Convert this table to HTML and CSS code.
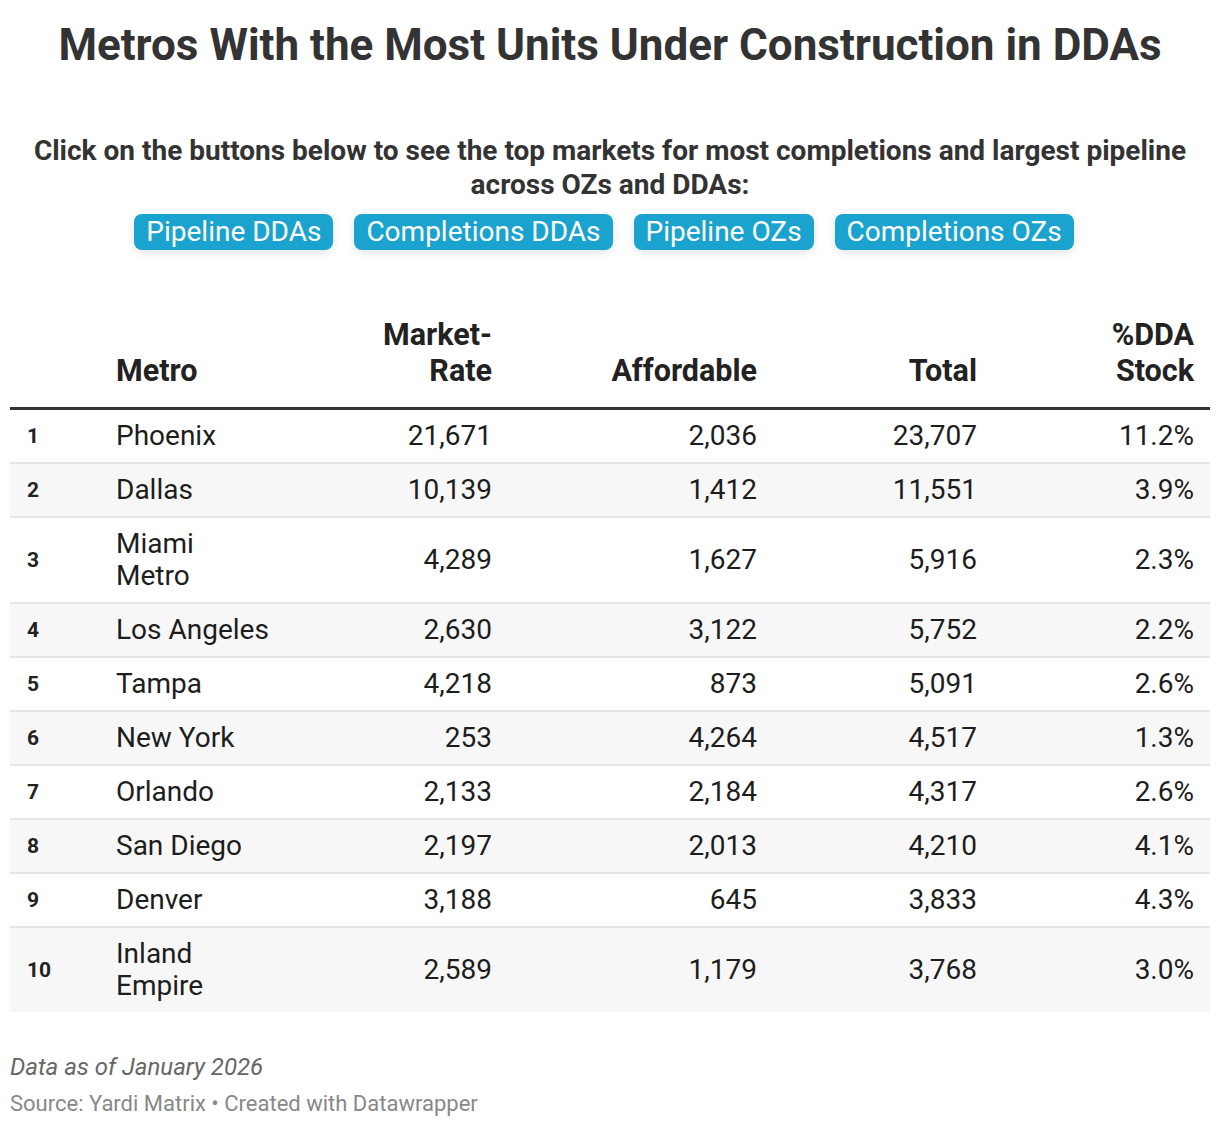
FILE: index.html
```html
<!DOCTYPE html>
<html lang="en">
<head>
<meta charset="utf-8">
<title>Metros With the Most Units Under Construction in DDAs</title>
<link rel="stylesheet" href="styles.css">
</head>
<body>
<div class="chart">
  <h1 class="title">Metros With the Most Units Under Construction in DDAs</h1>
  <p class="intro">Click on the buttons below to see the top markets for most completions and largest pipeline across OZs and DDAs:</p>
  <div class="buttons">
    <span class="btn">Pipeline DDAs</span>
    <span class="btn">Completions DDAs</span>
    <span class="btn">Pipeline OZs</span>
    <span class="btn">Completions OZs</span>
  </div>
  <table class="data">
    <colgroup>
      <col class="c-rank">
      <col class="c-metro">
      <col class="c-mr">
      <col class="c-aff">
      <col class="c-tot">
      <col class="c-pct">
    </colgroup>
    <thead>
      <tr>
        <th class="rank"></th>
        <th class="left">Metro</th>
        <th>Market-<br>Rate</th>
        <th>Affordable</th>
        <th>Total</th>
        <th>%DDA<br>Stock</th>
      </tr>
    </thead>
    <tbody>
      <tr><td class="rank">1</td><td class="left">Phoenix</td><td>21,671</td><td>2,036</td><td>23,707</td><td>11.2%</td></tr>
      <tr><td class="rank">2</td><td class="left">Dallas</td><td>10,139</td><td>1,412</td><td>11,551</td><td>3.9%</td></tr>
      <tr><td class="rank">3</td><td class="left">Miami<br>Metro</td><td>4,289</td><td>1,627</td><td>5,916</td><td>2.3%</td></tr>
      <tr><td class="rank">4</td><td class="left">Los Angeles</td><td>2,630</td><td>3,122</td><td>5,752</td><td>2.2%</td></tr>
      <tr><td class="rank">5</td><td class="left">Tampa</td><td>4,218</td><td>873</td><td>5,091</td><td>2.6%</td></tr>
      <tr><td class="rank">6</td><td class="left">New York</td><td>253</td><td>4,264</td><td>4,517</td><td>1.3%</td></tr>
      <tr><td class="rank">7</td><td class="left">Orlando</td><td>2,133</td><td>2,184</td><td>4,317</td><td>2.6%</td></tr>
      <tr><td class="rank">8</td><td class="left">San Diego</td><td>2,197</td><td>2,013</td><td>4,210</td><td>4.1%</td></tr>
      <tr><td class="rank">9</td><td class="left">Denver</td><td>3,188</td><td>645</td><td>3,833</td><td>4.3%</td></tr>
      <tr><td class="rank">10</td><td class="left">Inland<br>Empire</td><td>2,589</td><td>1,179</td><td>3,768</td><td>3.0%</td></tr>
    </tbody>
  </table>
  <p class="notes">Data as of January 2026</p>
  <p class="source">Source: Yardi Matrix • Created with Datawrapper</p>
</div>
</body>
</html>
```

FILE: styles.css
```css
* { box-sizing: border-box; }
html, body { margin: 0; padding: 0; background: #fff; }
body { font-family: Roboto, "Liberation Sans", sans-serif; color: #222; }

.chart { padding: 19px 10px 10px; }

.title {
  margin: 0;
  font-size: 44px;
  line-height: 52px;
  font-weight: 700;
  color: #333;
  text-align: center;
}

.intro {
  margin: 63px 0 0;
  font-size: 28px;
  line-height: 34px;
  font-weight: 700;
  color: #333;
  text-align: center;
}

.buttons {
  display: flex;
  justify-content: center;
  gap: 21px;
  margin-top: 12px;
  padding-right: 12px;
}

.btn {
  display: inline-block;
  background: #1ba3cf;
  color: #fff;
  font-size: 28px;
  line-height: 36px;
  padding: 0 12px;
  border-radius: 8px;
  box-shadow: 0 2px 8px rgba(0,0,0,0.12);
}

.data {
  width: 100%;
  margin-top: 67px;
  border-collapse: collapse;
  table-layout: fixed;
}
.c-rank { width: 90px; }
.c-metro { width: 188px; }
.c-mr { width: 220px; }
.c-aff { width: 265px; }
.c-tot { width: 220px; }
.c-pct { width: 217px; }

.data th {
  font-size: 30.5px;
  line-height: 36px;
  font-weight: 700;
  color: #222;
  text-align: right;
  vertical-align: bottom;
  padding: 0 16px 18px;
  border-bottom: 3px solid #333;
}
.data td {
  font-size: 28px;
  line-height: 32px;
  text-align: right;
  padding: 10px 16px;
  border-bottom: 2px solid #e6e6e6;
  color: #1d1d1d;
}
.data tbody tr:nth-child(even) td { background: #f7f7f7; }
.data tbody tr:last-child td { border-bottom: none; }
.data .left { text-align: left; }
.data .rank {
  text-align: left;
  padding-left: 17px;
  font-size: 21px;
  font-weight: 700;
  color: #222;
}

.notes {
  margin: 40px 0 0;
  font-size: 24px;
  line-height: 30px;
  font-style: italic;
  color: #666;
}
.source {
  margin: 8px 0 0;
  font-size: 22px;
  line-height: 28px;
  color: #888;
}
```
